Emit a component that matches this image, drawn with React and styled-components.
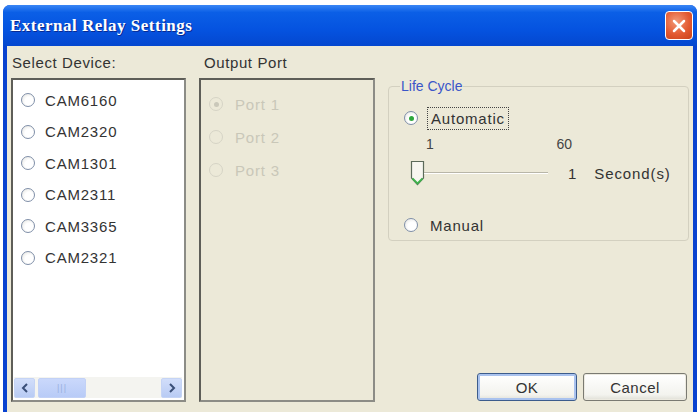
import React from 'react';
import styled, { createGlobalStyle } from 'styled-components';

const Global = createGlobalStyle`
  html, body { margin: 0; padding: 0; background: #fff; }
  body { font-family: "Liberation Sans", Arial, sans-serif; }
`;

const Window = styled.div`
  margin: 5px 0 0 3px;
  width: 694px;
  height: 407px;
  box-sizing: border-box;
  background: #0842d0;
  border-radius: 7px 7px 0 0;
  padding: 0 4px 0 4px;
  display: flex;
  flex-direction: column;
`;

const TitleBar = styled.div`
  height: 41px;
  margin: 0 -4px;
  padding: 0 4px 0 7px;
  border-radius: 7px 7px 0 0;
  background: linear-gradient(#3a86f5 0%, #0b5fe6 18%, #0553e0 60%, #0447cf 100%);
  display: flex;
  align-items: center;
  justify-content: space-between;
`;

const Title = styled.div`
  font-family: "Liberation Serif", "Times New Roman", serif;
  font-weight: bold;
  font-size: 17px;
  letter-spacing: 0.5px;
  color: #fff;
  text-shadow: 1px 1px 0 #0a2a90;
`;

const CloseButton = styled.div`
  width: 28px;
  height: 29px;
  box-sizing: border-box;
  border: 1px solid #fff;
  border-radius: 4px;
  background: radial-gradient(circle at 40% 35%, #f29a78 0%, #e35a32 55%, #c94018 100%);
  display: flex;
  align-items: center;
  justify-content: center;
`;

const Body = styled.div`
  flex: 1;
  background: #ece9d8;
  display: flex;
  padding: 8px 0 0 4px;
  gap: 13px;
`;

const Column = styled.div`
  display: flex;
  flex-direction: column;
  width: ${p => p.$w}px;
`;

const Label = styled.div`
  font-size: 15px;
  letter-spacing: 0.6px;
  color: #333;
  height: 18px;
  line-height: 18px;
  margin-bottom: 6px;
  padding-left: ${p => p.$indent || 1}px;
`;

const ListBox = styled.div`
  height: 324px;
  box-sizing: border-box;
  border: 2px solid #5e5e58;
  border-right-color: #8c8c86;
  border-bottom-color: #8c8c86;
  background: ${p => (p.$white ? '#fff' : '#ece9d8')};
  display: flex;
  flex-direction: column;
`;

const Items = styled.div`
  flex: 1;
  display: flex;
  flex-direction: column;
  padding: ${p => p.$pad};
  gap: ${p => p.$gap}px;
`;

const Option = styled.div`
  display: flex;
  align-items: center;
  gap: ${p => p.$gap || 10}px;
  height: 18px;
  margin-top: ${p => p.$mt || 0}px;
  font-size: 15px;
  letter-spacing: 0.8px;
  color: ${p => (p.$disabled ? '#c9c7b8' : '#333')};
`;

const Radio = styled.span`
  width: 14px;
  height: 14px;
  box-sizing: border-box;
  border-radius: 50%;
  border: 1px solid ${p => (p.$disabled ? '#d6d4c6' : '#7f8fa8')};
  background: ${p => (p.$disabled ? '#ece9d8' : 'radial-gradient(circle at 60% 60%, #fff 40%, #e0e0dc 100%)')};
  display: flex;
  align-items: center;
  justify-content: center;
  flex-shrink: 0;
  &::after {
    content: '';
    display: ${p => (p.$checked ? 'block' : 'none')};
    width: 5px;
    height: 5px;
    border-radius: 50%;
    background: ${p => (p.$disabled ? '#cac8ba' : '#2ea83c')};
  }
`;

const ScrollBar = styled.div`
  height: 21px;
  margin: 0 2px 2px 1px;
  background: #f4f4f0;
  display: flex;
  align-items: center;
  gap: 3px;
`;

const ScrollButton = styled.div`
  width: 21px;
  height: 20px;
  box-sizing: border-box;
  background: linear-gradient(#d2defa, #b8cbf4);
  border: 1px solid #c5d4f5;
  border-radius: 2px;
  display: flex;
  align-items: center;
  justify-content: center;
  margin-left: ${p => (p.$right ? 'auto' : '0')};
`;

const Thumb = styled.div`
  width: 48px;
  height: 20px;
  box-sizing: border-box;
  background: linear-gradient(#cad8fb, #b8cbf7);
  border: 1px solid #c2d1f6;
  border-radius: 2px;
  display: flex;
  align-items: center;
  justify-content: center;
  color: #9ab0e0;
  font-size: 9px;
  letter-spacing: 1px;
`;

const RightColumn = styled.div`
  flex: 1;
  display: flex;
  flex-direction: column;
  padding: 24px 4px 11px 0;
`;

const Group = styled.fieldset`
  margin: 0;
  height: 163px;
  box-sizing: border-box;
  border: 1px solid #d3d0c0;
  border-radius: 4px;
  padding: 15px 0 0 15px;
  display: flex;
  flex-direction: column;
  font-size: 15px;
  color: #333;
`;

const Legend = styled.legend`
  color: #3a56c8;
  font-size: 14px;
  padding: 0 1px;
  margin-left: -4px;
`;

const FocusText = styled.span`
  outline: 1px dotted #444;
  outline-offset: 2px;
  padding: 0 1px;
`;

const Scale = styled.div`
  display: flex;
  justify-content: space-between;
  width: 146px;
  padding-left: 22px;
  margin-top: 9px;
  font-size: 14px;
  color: #444;
`;

const SliderRow = styled.div`
  display: flex;
  align-items: center;
  margin-top: 8px;
  padding-left: 6px;
  height: 26px;
  font-size: 15px;
`;

const Track = styled.div`
  width: 124px;
  height: 1px;
  background: #b8b6a8;
  border-bottom: 1px solid #fff;
  margin-left: -1px;
`;

const Value = styled.span`
  margin-left: ${p => p.$ml}px;
  letter-spacing: 0.9px;
`;

const Buttons = styled.div`
  margin-top: auto;
  display: flex;
  justify-content: flex-end;
  gap: 6px;
  padding-right: 2px;
`;

const Button = styled.button`
  width: ${p => p.$w}px;
  height: 28px;
  box-sizing: border-box;
  border: 1px solid ${p => (p.$default ? '#3c5c8c' : '#7a7a72')};
  border-radius: 3px;
  background: linear-gradient(#ffffff, #f3f3ee 80%, #e0dfd6);
  box-shadow: ${p => (p.$default ? 'inset 0 0 0 2px #a9c2ee' : 'inset 0 0 0 1px #eceae0')};
  font-family: "Liberation Sans", Arial, sans-serif;
  font-size: 15px;
  letter-spacing: 0.5px;
  color: #333;
  padding: 0;
`;

const devices = ['CAM6160', 'CAM2320', 'CAM1301', 'CAM2311', 'CAM3365', 'CAM2321'];
const ports = ['Port 1', 'Port 2', 'Port 3'];

const SliderThumb = () => (
  <svg width="15" height="26" viewBox="0 0 15 26">
    <path d="M1.5 1.5 H13.5 V18 L7.5 24.5 L1.5 18 Z" fill="#f7f6f0" stroke="#5c6a5a" strokeWidth="1.2" />
    <path d="M2.5 18.5 L7.5 23.5 L12.5 18.5" fill="none" stroke="#3fb24c" strokeWidth="1.8" />
  </svg>
);

export default function App() {
  return (
    <>
      <Global />
      <Window>
        <TitleBar>
          <Title>External Relay Settings</Title>
          <CloseButton>
            <svg width="14" height="14" viewBox="0 0 14 14">
              <path d="M2 2 L12 12 M12 2 L2 12" stroke="#fff" strokeWidth="2.5" strokeLinecap="round" />
            </svg>
          </CloseButton>
        </TitleBar>
        <Body>
          <Column $w={175}>
            <Label>Select Device:</Label>
            <ListBox $white>
              <Items $pad="11px 0 0 8px" $gap={13.5}>
                {devices.map(d => (
                  <Option key={d}>
                    <Radio />
                    {d}
                  </Option>
                ))}
              </Items>
              <ScrollBar>
                <ScrollButton>
                  <svg width="8" height="10" viewBox="0 0 8 10">
                    <path d="M6 1 L2 5 L6 9" fill="none" stroke="#3a4f78" strokeWidth="2" />
                  </svg>
                </ScrollButton>
                <Thumb>|||</Thumb>
                <ScrollButton $right>
                  <svg width="8" height="10" viewBox="0 0 8 10">
                    <path d="M2 1 L6 5 L2 9" fill="none" stroke="#3a4f78" strokeWidth="2" />
                  </svg>
                </ScrollButton>
              </ScrollBar>
            </ListBox>
          </Column>
          <Column $w={176}>
            <Label $indent={5}>Output Port</Label>
            <ListBox>
              <Items $pad="15px 0 0 8px" $gap={15}>
                {ports.map((p, i) => (
                  <Option key={p} $disabled $gap={12}>
                    <Radio $disabled $checked={i === 0} />
                    {p}
                  </Option>
                ))}
              </Items>
            </ListBox>
          </Column>
          <RightColumn>
            <Group>
              <Legend>Life Cycle</Legend>
              <Option $gap={12}>
                <Radio $checked />
                <FocusText>Automatic</FocusText>
              </Option>
              <Scale>
                <span>1</span>
                <span>60</span>
              </Scale>
              <SliderRow>
                <SliderThumb />
                <Track />
                <Value $ml={20}>1</Value>
                <Value $ml={17}>Second(s)</Value>
              </SliderRow>
              <Option $gap={12} $mt={30}>
                <Radio />
                Manual
              </Option>
            </Group>
            <Buttons>
              <Button $default $w={100}>OK</Button>
              <Button $w={104}>Cancel</Button>
            </Buttons>
          </RightColumn>
        </Body>
      </Window>
    </>
  );
}
